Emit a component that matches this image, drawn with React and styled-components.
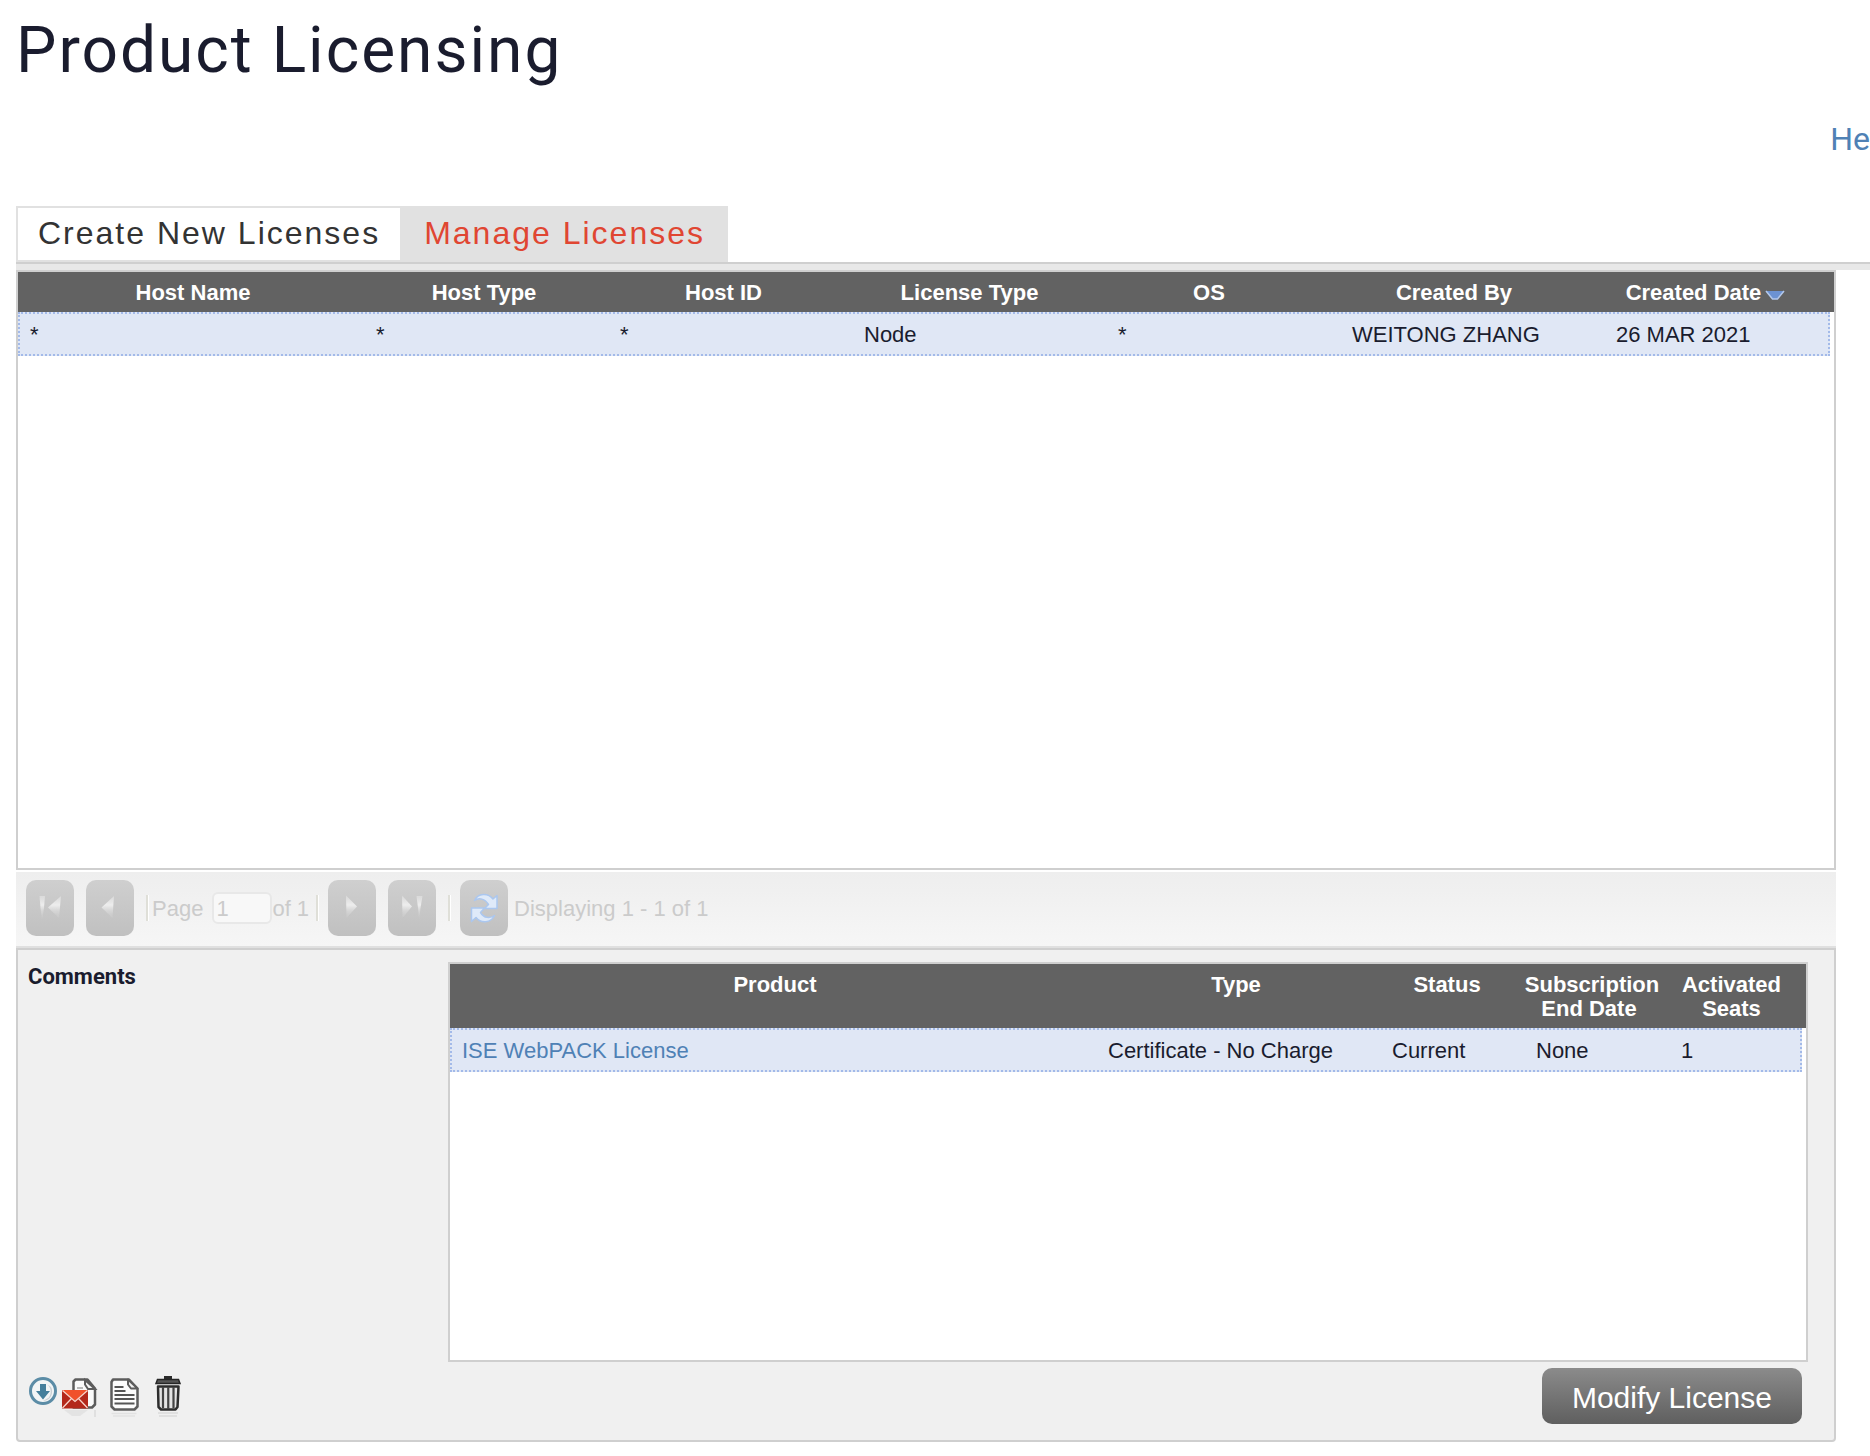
import React from "react";
import styled, { createGlobalStyle } from "styled-components";

const sans = '"Liberation Sans", Arial, sans-serif';
const display = 'Roboto, "Liberation Sans", sans-serif';

const GlobalStyle = createGlobalStyle`
  *, *::before, *::after { box-sizing: border-box; }
  body {
    margin: 0;
    background: #fff;
    color: #1a1c2e;
    font: 22px/24px ${sans};
    overflow-x: hidden;
  }
  button, input { font: inherit; margin: 0; }
`;

const Page = styled.main`
  padding: 13px 0 14px 16px;
`;

const Title = styled.h1`
  margin: 0;
  font: 400 64px/76px ${display};
  letter-spacing: 2px;
`;

const HelpBar = styled.div`
  display: flex;
  justify-content: flex-end;
  margin: 31px 0 48px;
`;

const HelpLink = styled.a`
  font: 400 32px/38px ${display};
  color: #4f81b5;
  text-decoration: none;
`;

const Tabs = styled.div`
  display: flex;
  height: 56px;
`;

const Tab = styled.button`
  padding: ${(p) => (p.$active ? "0 23px 2px 24px" : "0 20px 2px")};
  border: ${(p) => (p.$active ? "0" : "2px solid #e1e1e1")};
  border-right: 0;
  background: ${(p) => (p.$active ? "#e1e1e1" : "#fff")};
  color: ${(p) => (p.$active ? "#e04632" : "#333")};
  font-size: 32px;
  line-height: 36px;
  letter-spacing: 2px;
  white-space: nowrap;
`;

const TabStrip = styled.div`
  height: 8px;
  border-top: 2px solid #cfcfcf;
  background: #e8e8e8;
`;

const Content = styled.div`
  margin-right: 34px;
`;

const GridBox = styled.div`
  min-height: ${(p) => p.$minHeight};
  border: 2px solid #cfcfcf;
  background: #fff;
`;

const Table = styled.table`
  display: block;
`;

const HeadSection = styled.thead`
  display: block;
`;

const BodySection = styled.tbody`
  display: block;
`;

const HeadRow = styled.tr`
  display: grid;
  grid-template-columns: ${(p) => p.$columns};
  padding: 9px 5px 7px 0;
  background: #626262;
`;

const HeadCell = styled.th`
  padding: 0;
  color: #fff;
  font-weight: 700;
  text-align: center;
  white-space: pre-line;
`;

const BodyRow = styled.tr`
  display: grid;
  grid-template-columns: ${(p) => p.$columns};
  margin-right: 4px;
  padding: 9px 0 7px;
  border: 2px dotted #a3bae9;
  background: #e0e7f5;
`;

const BodyCell = styled.td`
  padding: 0 0 0 10px;
  white-space: nowrap;
`;

const ProductLink = styled.a`
  color: #4f81b5;
  text-decoration: none;
`;

const SortArrow = styled.svg`
  width: 20px;
  height: 10px;
  margin-left: 4px;
`;

const Pager = styled.div`
  display: flex;
  align-items: center;
  height: 76px;
  margin-top: 2px;
  padding: 0 10px 2px;
  border-bottom: 2px solid #e0e0e0;
  background: linear-gradient(#eeeeee, #f6f6f6);
  color: #cbcbcb;
`;

const PagerButton = styled.button`
  display: grid;
  place-items: center;
  width: 48px;
  height: 56px;
  margin-right: ${(p) => (p.$last ? "6px" : "12px")};
  padding: 0;
  border: 0;
  border-radius: 10px;
  background: linear-gradient(#cfcfcf, #c0c0c0);
`;

const Divider = styled.span`
  width: 3px;
  height: 26px;
  margin-right: ${(p) => (p.$tight ? "3px" : "9px")};
  border-left: 2px solid #dfdfd8;
  border-right: 1px solid #fff;
`;

const PagerText = styled.span`
  padding-top: 2px;
`;

const PageInput = styled.input`
  width: 60px;
  height: 32px;
  margin-left: 9px;
  padding: 2px 2px 0;
  border: 2px solid #e8e8e8;
  border-radius: 6px;
  background: #f8f8f8;
  color: #cbcbcb;
`;

const PageTotal = styled(PagerText)`
  margin-right: 7px;
`;

const Panel = styled.section`
  display: grid;
  grid-template-columns: 420px minmax(0, 1fr);
  gap: 6px 0;
  padding: 12px 26px 16px 10px;
  border: 2px solid #cfcfcf;
  border-radius: 0 0 4px 4px;
  background: #f0f0f0;
`;

const PanelTitle = styled.h2`
  margin: 0;
  padding-top: 2px;
  font: 700 22px/26px ${display};
`;

const IconBar = styled.div`
  display: flex;
  align-items: center;
`;

const IconButton = styled.button`
  display: block;
  width: ${(p) => (p.$narrow ? "30px" : "44px")};
  height: 44px;
  padding: 0;
  border: 0;
  background: none;

  svg { display: block; }
`;

const Actions = styled.div`
  display: flex;
  justify-content: flex-end;
  padding-right: 6px;
`;

const ModifyButton = styled.button`
  height: 56px;
  padding: 3px 30px 0;
  border: 0;
  border-radius: 10px;
  background: linear-gradient(#8b8b8b, #5f5f5f);
  color: #fff;
  font-size: 30px;
  line-height: 36px;
`;

const pagerGlyphs = {
  first: (
    <>
      <path d="M13.500 16h5.500l-1 12-2 12-1.500-12z" />
      <path d="M35 16 22 27.500 33 38z" />
    </>
  ),
  prev: <path d="M28 16 15.500 27.500 26.500 38z" />,
  next: <path d="M18 15.500 29 26.500 18.500 38z" />,
  last: (
    <>
      <path d="M14 15.500 24 26.500 14.500 38z" />
      <path d="M28.500 16h6l-2 12-1.500 12-1-12z" />
    </>
  ),
};

function PagerGlyph({ name }) {
  return (
    <svg width="48" height="56" viewBox="0 0 48 56" aria-hidden="true">
      <defs>
        <linearGradient id={`fade-${name}`} x1="0" y1="15" x2="0" y2="40" gradientUnits="userSpaceOnUse">
          <stop offset="0" stopColor="#f0f0f0" stopOpacity="0.35" />
          <stop offset="0.4" stopColor="#f4f4f4" stopOpacity="0.85" />
          <stop offset="0.65" stopColor="#e8e8e8" stopOpacity="0.4" />
          <stop offset="1" stopColor="#e0e0e0" stopOpacity="0" />
        </linearGradient>
        <filter id={`soft-${name}`}>
          <feGaussianBlur stdDeviation="0.7" />
        </filter>
      </defs>
      <g fill={`url(#fade-${name})`} filter={`url(#soft-${name})`}>{pagerGlyphs[name]}</g>
    </svg>
  );
}

function RefreshGlyph() {
  return (
    <svg width="48" height="56" viewBox="0 0 48 56" aria-hidden="true">
      <g fill="#dfeaf9" stroke="#abc7ef" strokeWidth="1.500" strokeLinejoin="round">
        <path d="M14.500 20.500C18 13 28 12.500 33 19l4-3.500V28.500H24.500l4-4C25 18.500 19 17.500 14.500 20.500z" />
        <path d="M34.500 35.500C31 43 21 44 16 37.500L11.500 41.500V28H24.500l-4 4.500C24 38.500 30 38.500 34.500 35.500z" />
      </g>
    </svg>
  );
}

function DownloadIcon() {
  return (
    <svg width="30" height="44" viewBox="0 0 30 44" aria-hidden="true">
      <circle cx="15" cy="17" r="12.500" fill="#f2f5f6" stroke="#5b8ca6" strokeWidth="3" />
      <path d="M18 9.500c5 3 6 9 3 14l-6 3.500c8 0 11-9 8-14z" fill="#c9d0d4" />
      <path d="M12 10h6v7h4l-7 8.500L8 17h4z" fill="#457f9c" />
    </svg>
  );
}

function MailIcon() {
  return (
    <svg width="44" height="44" viewBox="0 0 44 44" aria-hidden="true">
      <path d="M6 36h24l-8 6h-8z" fill="#e3e3e3" />
      <path d="M37 36v7" stroke="#e0e0e0" strokeWidth="2" />
      <path d="M17.500 5.500h12l7.500 9v16l-3 3H15.500v-26z" fill="#fafafa" stroke="#5c5c5c" strokeWidth="2.500" strokeLinejoin="round" />
      <path d="M27 6v4.500l3 4.500h7z" fill="#f4f4f4" stroke="#5c5c5c" strokeWidth="2" />
      <path d="M19 14h6" stroke="#b9b9b9" strokeWidth="2" />
      <path d="M4 16h26v18.500H4z" fill="#b3281b" />
      <path d="M4 16h26L17 27z" fill="#f0512b" />
      <path d="m4.500 16.500 12.500 11 12.500-11M4.500 34l9-9.500M29.500 34l-9-9.500" fill="none" stroke="#f7d5cb" strokeWidth="1.300" />
    </svg>
  );
}

function DocumentIcon() {
  return (
    <svg width="44" height="44" viewBox="0 0 44 44" aria-hidden="true">
      <path d="M9.500 39.500h25M11 42h22" stroke="#e2e2e2" strokeWidth="1.500" />
      <path d="M11 5.500H27l8.500 9v18l-3 3h-20l-3-3V8z" fill="#fcfcfc" stroke="#5c5c5c" strokeWidth="2.500" strokeLinejoin="round" />
      <path d="M26 5.500v5l3 4h6.500z" fill="#f1f1f1" stroke="#5c5c5c" strokeWidth="2" strokeLinejoin="round" />
      <path d="M12.500 13h9M12.500 17h11M12.500 21h20M12.500 25h20M12.500 29.500h20" stroke="#555" strokeWidth="2" />
    </svg>
  );
}

function TrashIcon() {
  return (
    <svg width="44" height="44" viewBox="0 0 44 44" aria-hidden="true">
      <path d="M12 39h20M13 42h18" stroke="#e0e0e0" strokeWidth="2" />
      <path d="M18 2h8v3h-8z" fill="#2b2b2b" />
      <path d="M11.500 5.500h21L34 9.500H10z" fill="#555" stroke="#262626" strokeWidth="1.500" />
      <path d="M12 12.500h20.500l-1 20.500-2 2.500H15L12.500 33z" fill="#e4e4e4" stroke="#2d2d2d" strokeWidth="2.500" strokeLinejoin="round" />
      <path d="M17 13v21M22.250 13v22M27.500 13v21" stroke="#444" strokeWidth="2.200" />
    </svg>
  );
}

function DataGrid({ label, minHeight, headColumns, bodyColumns, headers, rows }) {
  return (
    <GridBox $minHeight={minHeight}>
      <Table aria-label={label}>
        <HeadSection>
          <HeadRow $columns={headColumns}>
            {headers.map((header, i) => (
              <HeadCell key={i} scope="col">{header}</HeadCell>
            ))}
          </HeadRow>
        </HeadSection>
        <BodySection>
          {rows.map((row, r) => (
            <BodyRow key={r} $columns={bodyColumns}>
              {row.map((cell, i) => (
                <BodyCell key={i}>{cell}</BodyCell>
              ))}
            </BodyRow>
          ))}
        </BodySection>
      </Table>
    </GridBox>
  );
}

const licenseHeaders = [
  "Host Name",
  "Host Type",
  "Host ID",
  "License Type",
  "OS",
  "Created By",
  <>
    Created Date
    <SortArrow viewBox="0 0 20 10" aria-hidden="true">
      <path d="M1 1h18l-6.500 8h-5z" fill="#6c92d2" />
      <path d="M1 1l6.500 8h5L19 1" fill="none" stroke="#b4c8ea" strokeWidth="1.500" />
    </SortArrow>
  </>,
];

const licenseRows = [["*", "*", "*", "Node", "*", "WEITONG ZHANG", "26 MAR 2021"]];

const productHeaders = ["Product", "Type", "Status", "Subscription\nEnd Date\u00a0", "Activated\nSeats"];

const productRows = [
  [<ProductLink href="#product">ISE WebPACK License</ProductLink>, "Certificate - No Charge", "Current", "None", "1"],
];

export default function App() {
  return (
    <Page>
      <GlobalStyle />
      <Title>Product Licensing</Title>
      <HelpBar>
        <HelpLink href="#help">He</HelpLink>
      </HelpBar>

      <Tabs role="tablist">
        <Tab type="button" role="tab" aria-selected="false">Create New Licenses</Tab>
        <Tab type="button" role="tab" aria-selected="true" $active>Manage Licenses</Tab>
      </Tabs>
      <TabStrip />

      <Content>
        <DataGrid
          label="Licenses"
          minHeight="600px"
          headColumns="350fr 232fr 247fr 245fr 234fr 256fr 247fr"
          bodyColumns="346fr 244fr 244fr 254fr 234fr 264fr 222fr"
          headers={licenseHeaders}
          rows={licenseRows}
        />

        <Pager>
          <PagerButton type="button" aria-label="First page" disabled><PagerGlyph name="first" /></PagerButton>
          <PagerButton type="button" aria-label="Previous page" disabled><PagerGlyph name="prev" /></PagerButton>
          <Divider $tight />
          <PagerText as="label" htmlFor="page-number">Page</PagerText>
          <PageInput id="page-number" type="text" defaultValue="1" />
          <PageTotal>of 1</PageTotal>
          <Divider />
          <PagerButton type="button" aria-label="Next page" disabled><PagerGlyph name="next" /></PagerButton>
          <PagerButton type="button" aria-label="Last page" disabled><PagerGlyph name="last" /></PagerButton>
          <Divider />
          <PagerButton type="button" aria-label="Refresh" disabled $last><RefreshGlyph /></PagerButton>
          <PagerText>Displaying 1 - 1 of 1</PagerText>
        </Pager>

        <Panel>
          <PanelTitle>Comments</PanelTitle>
          <DataGrid
            label="Products"
            minHeight="400px"
            headColumns="650fr 272fr 150fr 140fr 139fr"
            bodyColumns="646fr 284fr 144fr 145fr 129fr"
            headers={productHeaders}
            rows={productRows}
          />
          <IconBar>
            <IconButton type="button" aria-label="Download" $narrow><DownloadIcon /></IconButton>
            <IconButton type="button" aria-label="Email license"><MailIcon /></IconButton>
            <IconButton type="button" aria-label="View details"><DocumentIcon /></IconButton>
            <IconButton type="button" aria-label="Delete"><TrashIcon /></IconButton>
          </IconBar>
          <Actions>
            <ModifyButton type="button">Modify License</ModifyButton>
          </Actions>
        </Panel>
      </Content>
    </Page>
  );
}
